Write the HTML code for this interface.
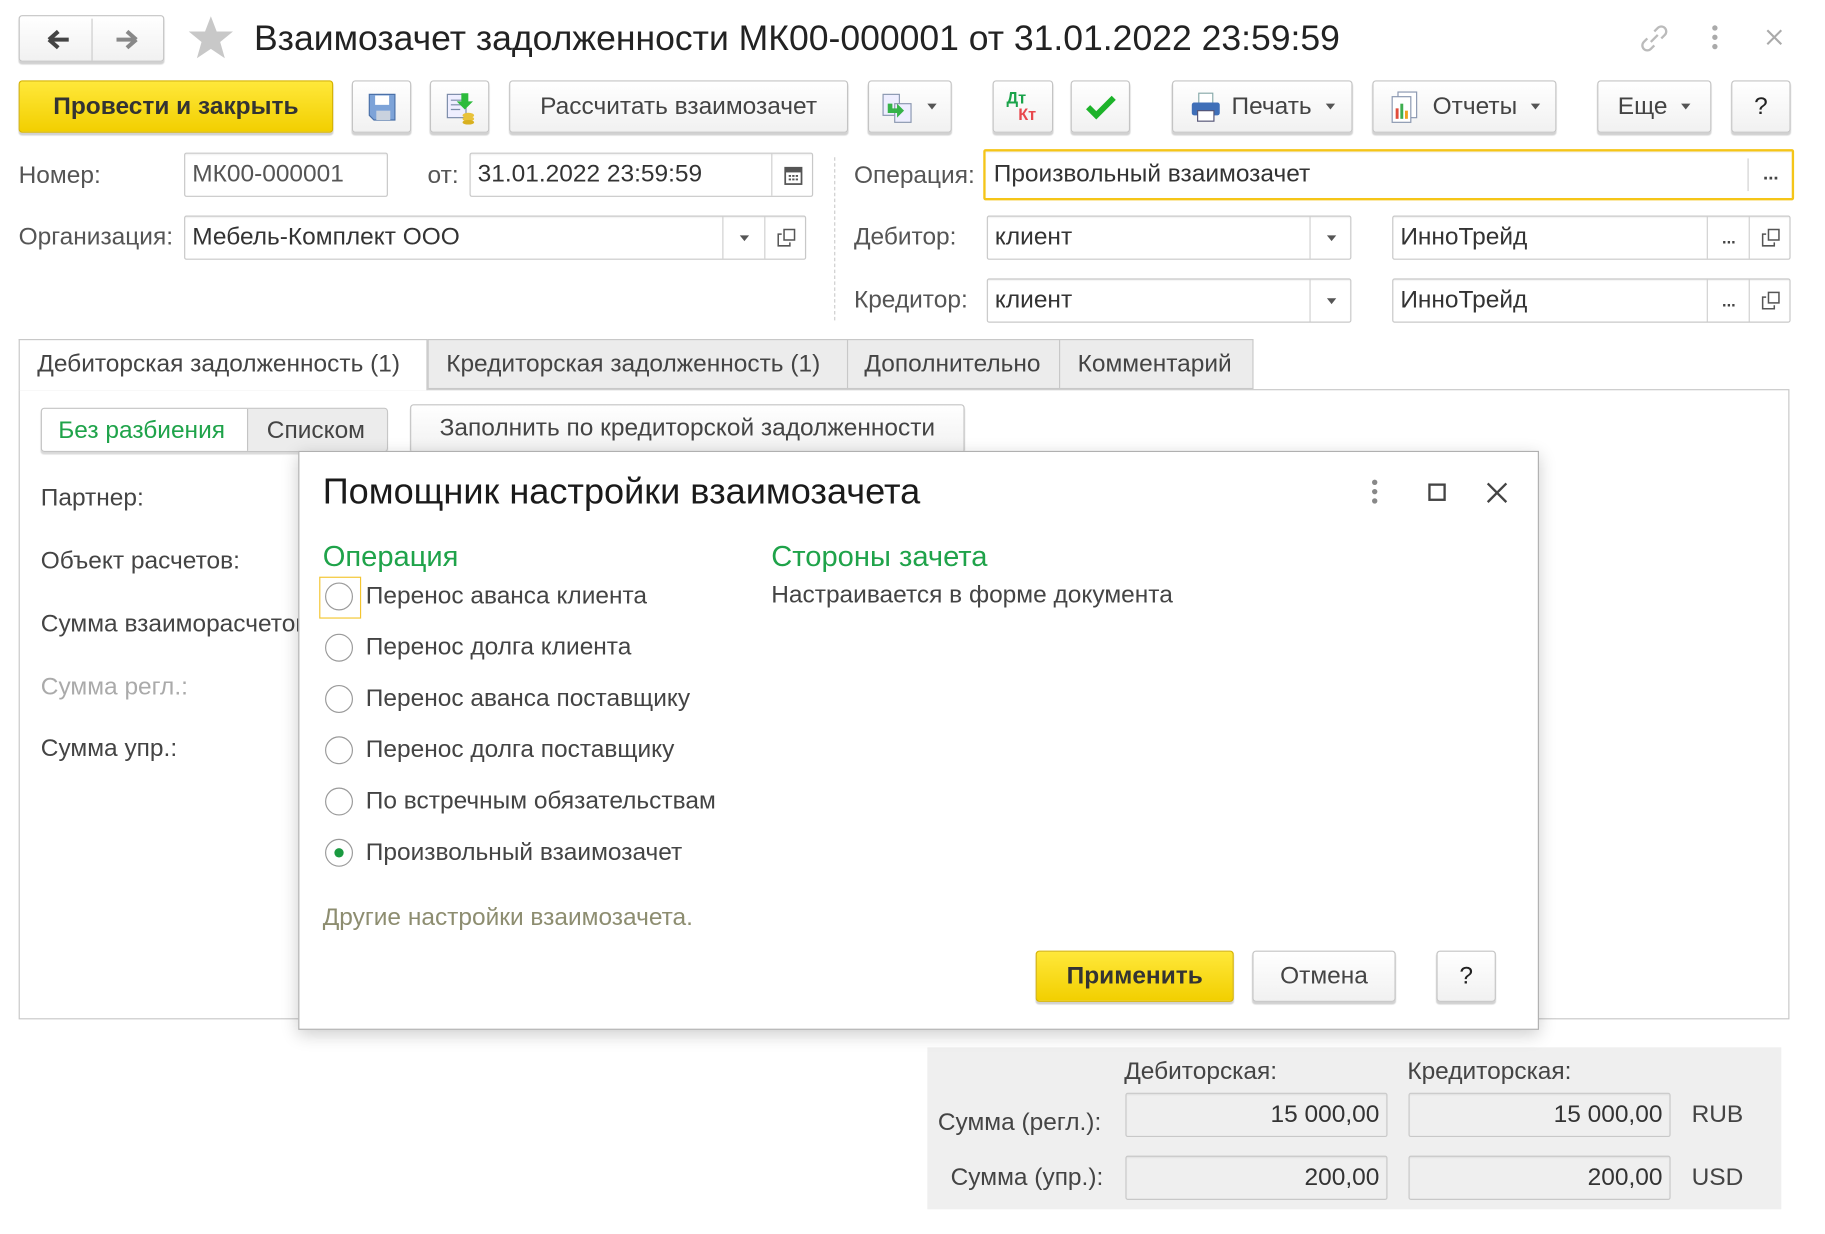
<!DOCTYPE html>
<html><head><meta charset="utf-8">
<style>
html,body{margin:0;padding:0;background:#fff;overflow:hidden}
body{width:1825px;height:1234px;position:relative}
#w{position:absolute;left:0;top:0;width:1553px;height:1050px;transform:scale(1.165);transform-origin:0 0;font-family:"Liberation Sans",Arial,sans-serif;color:#444}
.a{position:absolute}
.t{position:absolute;white-space:nowrap;font-size:21px;line-height:24px;transform:translateY(-50%)}
.btn{position:absolute;box-sizing:border-box;border:1px solid #c4c4c4;border-radius:3px;background:linear-gradient(#fff,#f1f1f1);box-shadow:0 2px 1px rgba(0,0,0,.18);font-size:21px;color:#444;display:flex;align-items:center;justify-content:center;white-space:nowrap}
.y{background:linear-gradient(#ffe83a,#f2cf00);border-color:#d6b300;color:#333;font-weight:bold}
.fld{position:absolute;box-sizing:border-box;border:1px solid #c8c8c8;border-radius:2px;background:#fff;box-shadow:inset 0 1px 1px rgba(0,0,0,.06);font-size:21px;color:#333;padding-left:6px;display:flex;align-items:center;white-space:nowrap}
.sep{position:absolute;top:0;bottom:0;border-left:1px solid #d0d0d0;display:flex;align-items:center;justify-content:center;font-size:14px;color:#444}
.rad{position:absolute;width:24px;height:24px;box-sizing:border-box;border:1.5px solid #9a9a9a;border-radius:50%;background:#fff}
.dd{width:0;height:0;border-left:4px solid transparent;border-right:4px solid transparent;border-top:5px solid #555}
</style></head><body><div id="w">

<div class="btn" style="left:16px;top:13px;width:125px;height:40px;justify-content:flex-start">
 <svg width="125" height="40" style="position:absolute;left:0;top:0"><line x1="62" y1="2" x2="62" y2="38" stroke="#ccc"/>
 <path d="M25 20h17M25 20l8-7M25 20l8 7" stroke="#444" stroke-width="3.5" fill="none"/>
 <path d="M100 20h-17M100 20l-8-7M100 20l-8 7" stroke="#888" stroke-width="3.5" fill="none"/></svg></div>
<svg class="a" style="left:161px;top:12px" width="40" height="40"><polygon points="20,2 25,15 39,15 28,24 32,38 20,30 8,38 12,24 1,15 15,15" fill="#c8c8c8"/></svg>
<div class="t" style="left:218px;top:33px;font-size:30.5px;line-height:34px;color:#222">Взаимозачет задолженности МК00-000001 от 31.01.2022 23:59:59</div>
<svg class="a" style="left:1405px;top:18px" width="30" height="30"><path d="M12 18l6-6M9 15l-3 3a4 4 0 0 0 6 6l3-3M21 15l3-3a4 4 0 0 0-6-6l-3 3" stroke="#bbb" stroke-width="2" fill="none"/></svg>
<svg class="a" style="left:1466px;top:20px" width="12" height="24"><circle cx="6" cy="4" r="2.3" fill="#aaa"/><circle cx="6" cy="12" r="2.3" fill="#aaa"/><circle cx="6" cy="20" r="2.3" fill="#aaa"/></svg>
<svg class="a" style="left:1515px;top:24px" width="16" height="16"><path d="M2 2l12 12M14 2L2 14" stroke="#aaa" stroke-width="1.8"/></svg>

<div class="btn y" style="left:16px;top:69px;width:270px;height:45px;font-size:21px">Провести и закрыть</div>
<div class="btn" style="left:302px;top:69px;width:51px;height:45px"><svg width="28" height="28"><path d="M3 3h22v22H7l-4-4z" fill="#7da3d8" stroke="#4a70a8"/><rect x="8" y="4" width="12" height="8" fill="#fff"/><rect x="9" y="17" width="12" height="8" fill="#c9d2de"/></svg></div>
<div class="btn" style="left:369px;top:69px;width:51px;height:45px"><svg width="30" height="30"><rect x="4" y="4" width="16" height="20" fill="#eef" stroke="#7a8aa8"/><path d="M7 9h10M7 13h10M7 17h8" stroke="#7a8aa8"/><path d="M16 3h6v7h4l-7 7-7-7h4z" fill="#2dbb3c"/><ellipse cx="22" cy="22" rx="5" ry="2.2" fill="#e8c23a"/><ellipse cx="22" cy="25" rx="5" ry="2.2" fill="#e8c23a"/><ellipse cx="22" cy="28" rx="5" ry="2" fill="#d8b020"/></svg></div>
<div class="btn" style="left:437px;top:69px;width:291px;height:45px">Рассчитать взаимозачет</div>
<div class="btn" style="left:745px;top:69px;width:72px;height:45px;justify-content:flex-start;padding-left:10px"><svg width="30" height="30"><rect x="2" y="4" width="14" height="18" fill="#eef" stroke="#8a97b0"/><rect x="12" y="12" width="14" height="16" fill="#eef" stroke="#8a97b0"/><path d="M6 12v8h8v4l6-6-6-6v4h-4v-4z" fill="#36b34a"/></svg><div class="dd" style="margin-left:10px"></div></div>
<div class="btn" style="left:852px;top:69px;width:52px;height:45px"><div style="position:relative;width:34px;height:34px;font-weight:bold;font-size:14px"><span style="position:absolute;left:3px;top:1px;color:#1aa34a">Дт</span><span style="position:absolute;left:13px;top:15px;color:#e8484d">Кт</span></div></div>
<div class="btn" style="left:919px;top:69px;width:51px;height:45px"><svg width="28" height="24"><path d="M3 12l7 7L25 4" stroke="#1db32a" stroke-width="5" fill="none"/></svg></div>
<div class="btn" style="left:1006px;top:69px;width:155px;height:45px"><svg width="28" height="28" style="margin-right:8px"><rect x="8" y="2" width="12" height="9" fill="#fff" stroke="#8aa"/><rect x="2" y="10" width="24" height="11" rx="2" fill="#3f6fb8"/><rect x="7" y="17" width="14" height="9" fill="#fff" stroke="#557"/></svg>Печать<div class="dd" style="margin-left:12px"></div></div>
<div class="btn" style="left:1178px;top:69px;width:158px;height:45px"><svg width="28" height="30" style="margin-right:10px"><rect x="8" y="2" width="16" height="22" fill="#fff" stroke="#8a97b0"/><rect x="3" y="6" width="16" height="22" fill="#fff" stroke="#8a97b0"/><rect x="6" y="16" width="2.5" height="9" fill="#e04c3c"/><rect x="10" y="12" width="2.5" height="13" fill="#3eae4e"/><rect x="14" y="18" width="2.5" height="7" fill="#f0a020"/></svg>Отчеты<div class="dd" style="margin-left:12px"></div></div>
<div class="btn" style="left:1371px;top:69px;width:98px;height:45px">Еще<div class="dd" style="margin-left:12px"></div></div>
<div class="btn" style="left:1486px;top:69px;width:51px;height:45px;color:#222">?</div>

<div class="t" style="left:16px;top:151px;color:#555">Номер:</div>
<div class="fld" style="left:158px;top:131px;width:175px;height:38px;color:#555">МК00-000001</div>
<div class="t" style="left:367px;top:151px;color:#555">от:</div>
<div class="fld" style="left:403px;top:131px;width:295px;height:38px">31.01.2022 23:59:59<div class="sep" style="left:258px;width:36px"><svg width="16" height="18"><rect x="1" y="3" width="14" height="14" fill="none" stroke="#555" stroke-width="1.5"/><rect x="1" y="3" width="14" height="4" fill="#555"/><path d="M4 10h2M7 10h2M10 10h2M4 13h2M7 13h2M10 13h2" stroke="#555" stroke-width="1.6"/></svg></div></div>
<div class="a" style="left:716px;top:135px;height:140px;border-left:1px dashed #ccc"></div>
<div class="t" style="left:733px;top:151px;color:#555">Операция:</div>
<div class="fld" style="left:844px;top:128px;width:696px;height:44px;border:2px solid #f5c518;padding-left:7px">Произвольный взаимозачет<div class="sep" style="left:654px;width:38px;top:6px;bottom:6px;font-size:16px;font-weight:bold">...</div></div>

<div class="t" style="left:16px;top:204px;color:#555">Организация:</div>
<div class="fld" style="left:158px;top:185px;width:534px;height:38px">Мебель-Комплект ООО<div class="sep" style="left:461px;width:36px"><div class="dd"></div></div><div class="sep" style="left:497px;width:36px"><svg width="16" height="16"><rect x="6" y="1" width="9" height="9" fill="none" stroke="#555" stroke-width="1.3"/><path d="M4 5H1v10h10v-3" fill="none" stroke="#555" stroke-width="1.3"/></svg></div></div>
<div class="t" style="left:733px;top:204px;color:#555">Дебитор:</div>
<div class="fld" style="left:847px;top:185px;width:313px;height:38px">клиент<div class="sep" style="left:276px;width:36px"><div class="dd"></div></div></div>
<div class="fld" style="left:1195px;top:185px;width:342px;height:38px">ИнноТрейд<div class="sep" style="left:269px;width:36px;font-weight:bold">...</div><div class="sep" style="left:305px;width:36px"><svg width="16" height="16"><rect x="6" y="1" width="9" height="9" fill="none" stroke="#555" stroke-width="1.3"/><path d="M4 5H1v10h10v-3" fill="none" stroke="#555" stroke-width="1.3"/></svg></div></div>
<div class="t" style="left:733px;top:258px;color:#555">Кредитор:</div>
<div class="fld" style="left:847px;top:239px;width:313px;height:38px">клиент<div class="sep" style="left:276px;width:36px"><div class="dd"></div></div></div>
<div class="fld" style="left:1195px;top:239px;width:342px;height:38px">ИнноТрейд<div class="sep" style="left:269px;width:36px;font-weight:bold">...</div><div class="sep" style="left:305px;width:36px"><svg width="16" height="16"><rect x="6" y="1" width="9" height="9" fill="none" stroke="#555" stroke-width="1.3"/><path d="M4 5H1v10h10v-3" fill="none" stroke="#555" stroke-width="1.3"/></svg></div></div>

<div class="a" style="left:16px;top:334px;width:1520px;height:541px;border:1px solid #c8c8c8;box-sizing:border-box"></div>
<div class="a" style="left:367px;top:291px;width:709px;height:43px;background:#ececec;border:1px solid #c8c8c8;box-sizing:border-box"></div>
<div class="a" style="left:727px;top:291px;height:43px;border-left:1px solid #c8c8c8"></div>
<div class="a" style="left:909px;top:291px;height:43px;border-left:1px solid #c8c8c8"></div>
<div class="a" style="left:16px;top:291px;width:351px;height:44px;background:#fff;border:1px solid #c8c8c8;border-bottom:none;box-sizing:border-box"></div>
<div class="t" style="left:32px;top:313px">Дебиторская задолженность (1)</div>
<div class="t" style="left:383px;top:313px">Кредиторская задолженность (1)</div>
<div class="t" style="left:742px;top:313px">Дополнительно</div>
<div class="t" style="left:925px;top:313px">Комментарий</div>

<div class="a" style="left:35px;top:350px;width:298px;height:38px;border:1px solid #c4c4c4;border-radius:3px;box-sizing:border-box;overflow:hidden;box-shadow:0 2px 1px rgba(0,0,0,.15)"><div class="a" style="left:176px;top:0;width:122px;height:38px;background:#ececec;border-left:1px solid #c4c4c4"></div></div>
<div class="t" style="left:50px;top:370px;color:#1fa34a">Без разбиения</div>
<div class="t" style="left:229px;top:370px">Списком</div>
<div class="btn" style="left:352px;top:347px;width:476px;height:42px">Заполнить по кредиторской задолженности</div>

<div class="t" style="left:35px;top:428px">Партнер:</div>
<div class="t" style="left:35px;top:482px">Объект расчетов:</div>
<div class="t" style="left:35px;top:536px">Сумма взаиморасчетов:</div>
<div class="t" style="left:35px;top:590px;color:#aaa">Сумма регл.:</div>
<div class="t" style="left:35px;top:643px">Сумма упр.:</div>

<div class="a" style="left:796px;top:899px;width:733px;height:139px;background:#efefef"></div>
<div class="t" style="left:965px;top:920px">Дебиторская:</div>
<div class="t" style="left:1208px;top:920px">Кредиторская:</div>
<div class="t" style="left:805px;top:964px">Сумма (регл.):</div>
<div class="t" style="left:816px;top:1011px">Сумма (упр.):</div>
<div class="fld" style="left:966px;top:938px;width:225px;height:38px;background:#efefef;justify-content:flex-end;padding-right:6px">15 000,00</div>
<div class="fld" style="left:1209px;top:938px;width:225px;height:38px;background:#efefef;justify-content:flex-end;padding-right:6px">15 000,00</div>
<div class="fld" style="left:966px;top:992px;width:225px;height:38px;background:#efefef;justify-content:flex-end;padding-right:6px">200,00</div>
<div class="fld" style="left:1209px;top:992px;width:225px;height:38px;background:#efefef;justify-content:flex-end;padding-right:6px">200,00</div>
<div class="t" style="left:1452px;top:957px">RUB</div>
<div class="t" style="left:1452px;top:1011px">USD</div>

<div class="a" style="left:256px;top:387px;width:1065px;height:497px;background:#fff;border:1px solid #b0b0b0;box-sizing:border-box;box-shadow:0 4px 14px rgba(0,0,0,.2)"></div>
<div class="t" style="left:277px;top:422px;font-size:31px;line-height:36px;color:#1a1a1a">Помощник настройки взаимозачета</div>
<svg class="a" style="left:1174px;top:410px" width="12" height="24"><circle cx="6" cy="4" r="2.3" fill="#888"/><circle cx="6" cy="12" r="2.3" fill="#888"/><circle cx="6" cy="20" r="2.3" fill="#888"/></svg>
<div class="a" style="left:1226px;top:415px;width:15px;height:15px;border:2px solid #444;box-sizing:border-box"></div>
<svg class="a" style="left:1275px;top:413px" width="20" height="20"><path d="M2 2l16 16M18 2L2 18" stroke="#444" stroke-width="2"/></svg>
<div class="t" style="left:277px;top:478px;font-size:25px;line-height:30px;color:#1fa34a">Операция</div>
<div class="t" style="left:662px;top:478px;font-size:25px;line-height:30px;color:#1fa34a">Стороны зачета</div>
<div class="t" style="left:662px;top:511px">Настраивается в форме документа</div>
<div class="a" style="left:274px;top:495px;width:36px;height:36px;border:1px solid #f3c530;box-sizing:border-box"></div>
<div class="rad" style="left:279px;top:500px"></div><div class="t" style="left:314px;top:512px">Перенос аванса клиента</div>
<div class="rad" style="left:279px;top:544px"></div><div class="t" style="left:314px;top:556px">Перенос долга клиента</div>
<div class="rad" style="left:279px;top:588px"></div><div class="t" style="left:314px;top:600px">Перенос аванса поставщику</div>
<div class="rad" style="left:279px;top:632px"></div><div class="t" style="left:314px;top:644px">Перенос долга поставщику</div>
<div class="rad" style="left:279px;top:676px"></div><div class="t" style="left:314px;top:688px">По встречным обязательствам</div>
<div class="rad" style="left:279px;top:720px"><div class="a" style="left:7px;top:7px;width:8px;height:8px;border-radius:50%;background:#1a9a40"></div></div><div class="t" style="left:314px;top:732px">Произвольный взаимозачет</div>
<div class="t" style="left:277px;top:788px;color:#8d8d70">Другие настройки взаимозачета.</div>
<div class="btn y" style="left:889px;top:816px;width:170px;height:44px">Применить</div>
<div class="btn" style="left:1075px;top:816px;width:123px;height:44px">Отмена</div>
<div class="btn" style="left:1233px;top:816px;width:51px;height:44px;color:#222">?</div>

</div></body></html>
